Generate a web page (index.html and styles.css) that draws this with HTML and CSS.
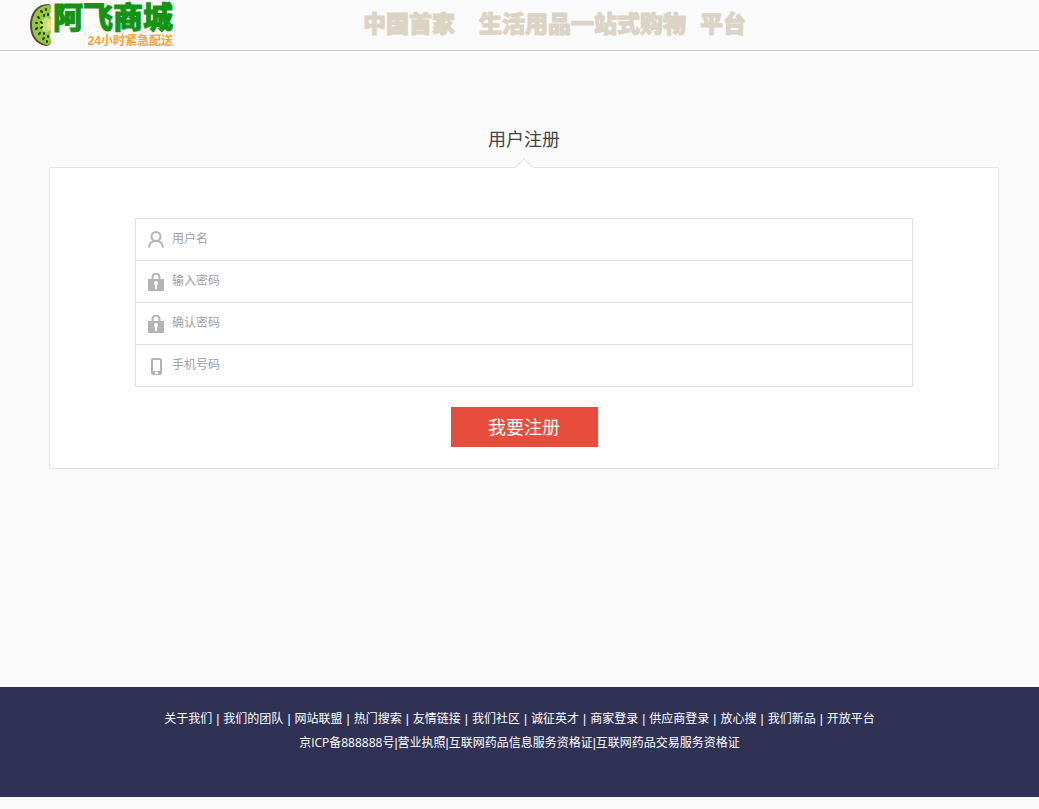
FILE: index.html
```html
<!DOCTYPE html>
<html lang="zh-CN">
<head>
    <meta charset="UTF-8">
    <meta name="viewport" content="width=device-width, initial-scale=1.0">
    <title>用户注册</title>
    <link rel="stylesheet" href="styles.css">
</head>
<body>
    <header class="header">
        <a class="logo" href="#">
            <svg class="logo-kiwi" width="24" height="44" viewBox="0 0 24 44">
                <path d="M19 1C8 1 1 10 1 22s7 20 16 21c3 0 5-2 5-4L8 22 22 5c0-3-1-4-3-4z" fill="#5a4a30"/>
                <path d="M19 2C9 3 3 11 3 22s6 18 15 20c3 0 4-2 4-4l-1-6 1-4V16l-1-4 1-6c0-3-1-4-3-4z" fill="#93c83e"/>
                <path d="M17 14l-5 4-1 4 2 5 5 3 3-3V16z" fill="#c5df7c"/>
                <path d="M22 16l-3 2-2 4 2 4 3 2z" fill="#f3dc7c"/>
                <path d="M12 8l1 1M17 6v1M15 12v1M19 11v1M9 14l1 1M7 20h1M12 19l1 1M7 26l1-1M12 25l1-1M10 31l1-1M15 30v1M14 36l1-1M19 33v1M18 38v1" stroke="#24350f" stroke-width="2" stroke-linecap="round"/>
            </svg>
            <span class="logo-text">
                <strong class="logo-name">阿飞商城</strong>
                <span class="logo-sub">24小时紧急配送</span>
            </span>
        </a>
        <p class="slogan"><span>中国首家</span><span>生活用品一站式购物</span><span>平台</span></p>
    </header>

    <main class="register">
        <h1 class="register-title">用户注册</h1>
        <form class="panel">
            <div class="fields">
                <div class="field">
                    <label for="username" aria-label="用户名">
                        <svg width="18" height="18" viewBox="0 0 18 18" fill="none" stroke="#b4b4b4" stroke-width="2">
                            <circle cx="9" cy="5.500" r="4.500"/>
                            <path d="M2 16.500c0-4 3-6.500 7-6.500s7 2.500 7 6.500"/>
                        </svg>
                    </label>
                    <input type="text" id="username" placeholder="用户名">
                </div>
                <div class="field">
                    <label for="password" aria-label="输入密码">
                        <svg width="18" height="18" viewBox="0 0 18 18">
                            <path d="M5.500 8V4a3.500 3.500 0 0 1 7 0V8" fill="none" stroke="#b4b4b4" stroke-width="2"/>
                            <path d="M1 6h16v12H1z" fill="#b4b4b4"/>
                            <path d="M9 8a2 2 0 0 1 2 2c0 1-1 2-1 3v3H8v-3c0-1-1-2-1-3a2 2 0 0 1 2-2z" fill="#fff"/>
                        </svg>
                    </label>
                    <input type="password" id="password" placeholder="输入密码">
                </div>
                <div class="field">
                    <label for="confirm" aria-label="确认密码">
                        <svg width="18" height="18" viewBox="0 0 18 18">
                            <path d="M5.500 8V4a3.500 3.500 0 0 1 7 0V8" fill="none" stroke="#b4b4b4" stroke-width="2"/>
                            <path d="M1 6h16v12H1z" fill="#b4b4b4"/>
                            <path d="M9 8a2 2 0 0 1 2 2c0 1-1 2-1 3v3H8v-3c0-1-1-2-1-3a2 2 0 0 1 2-2z" fill="#fff"/>
                        </svg>
                    </label>
                    <input type="password" id="confirm" placeholder="确认密码">
                </div>
                <div class="field">
                    <label for="phone" aria-label="手机号码">
                        <svg width="18" height="18" viewBox="0 0 18 18">
                            <rect x="4" y="1" width="11" height="17" rx="2" fill="#b4b4b4"/>
                            <path d="M6 3h7v11H6zM8 15h3v2H8z" fill="#fff"/>
                        </svg>
                    </label>
                    <input type="tel" id="phone" placeholder="手机号码">
                </div>
            </div>
            <button type="submit" class="submit">我要注册</button>
        </form>
    </main>

    <footer class="footer">
        <nav class="footer-links">
            <a href="#">关于我们</a><i>|</i>
            <a href="#">我们的团队</a><i>|</i>
            <a href="#">网站联盟</a><i>|</i>
            <a href="#">热门搜索</a><i>|</i>
            <a href="#">友情链接</a><i>|</i>
            <a href="#">我们社区</a><i>|</i>
            <a href="#">诚征英才</a><i>|</i>
            <a href="#">商家登录</a><i>|</i>
            <a href="#">供应商登录</a><i>|</i>
            <a href="#">放心搜</a><i>|</i>
            <a href="#">我们新品</a><i>|</i>
            <a href="#">开放平台</a>
        </nav>
        <p class="footer-info">京ICP备888888号<i>|</i>营业执照<i>|</i>互联网药品信息服务资格证<i>|</i>互联网药品交易服务资格证</p>
    </footer>
</body>
</html>
```

FILE: styles.css
```css
* {
    box-sizing: border-box;
}
body {
    margin: 0;
    background: #fafafa;
    font-family: "Open Sans", "Noto Sans CJK SC", sans-serif;
    font-size: 12px;
    color: #333;
}
a {
    color: inherit;
    text-decoration: none;
}

/* header */
.header {
    display: flex;
    height: 51px;
    padding-left: 29px;
    border-bottom: 1px solid #ccc;
}
.logo {
    display: flex;
    padding-top: 3px;
    font-family: "Liberation Sans", "Noto Sans CJK SC", sans-serif;
}
.logo-text {
    display: flex;
    flex-direction: column;
    align-items: flex-end;
}
.logo-name {
    font-size: 30px;
    line-height: 30px;
    font-weight: 900;
    color: #149414;
    -webkit-text-stroke: 1px #149414;
}
.logo-sub {
    font-size: 12px;
    line-height: 16px;
    font-weight: 700;
    color: #f9a13a;
}
.slogan {
    display: flex;
    margin: 0 0 0 190px;
    font-family: "Noto Sans CJK SC", sans-serif;
    font-size: 23px;
    line-height: 44px;
    font-weight: 900;
    color: #dbd3c3;
    -webkit-text-stroke: 1px #dbd3c3;
}
.slogan span + span {
    margin-left: 24px;
}
.slogan span:last-child {
    margin-left: 14px;
}

/* register form */
.register {
    padding: 76px 40px 0 49px;
}
.register-title {
    margin: 0;
    font-size: 18px;
    line-height: 24px;
    font-weight: 400;
    color: #444;
    text-align: center;
}
.panel {
    position: relative;
    margin-top: 16px;
    padding: 50px 85px 21px;
    border: 1px solid #e4e4e4;
    background: #fff;
    text-align: center;
}
.panel::before {
    content: "";
    position: absolute;
    top: -7px;
    left: 50%;
    width: 13px;
    height: 13px;
    margin-left: -7px;
    border: solid #e4e4e4;
    border-width: 1px 0 0 1px;
    background: #fff;
    transform: rotate(45deg);
}
.fields {
    border: 1px solid #dfdfdf;
}
.field {
    display: flex;
    align-items: center;
    height: 42px;
    padding-left: 11px;
}
.field + .field {
    border-top: 1px solid #dfdfdf;
}
.field:first-child {
    height: 41px;
}
.field label {
    height: 18px;
}
.field svg {
    display: block;
}
.field input {
    flex: 1;
    height: 40px;
    padding: 0 7px 2px;
    border: 0;
    outline: 0;
    background: none;
    font: inherit;
}
.field input::placeholder {
    color: #a0a0a0;
}
.submit {
    width: 147px;
    height: 40px;
    margin-top: 20px;
    padding: 0 0 2px;
    border: 0;
    background: #e84c3d;
    font-family: inherit;
    font-size: 18px;
    color: #fff;
    vertical-align: top;
    cursor: pointer;
}

/* footer */
.footer {
    height: 110px;
    margin: 218px 0 12px;
    padding-top: 20px;
    background: #2f3255;
    line-height: 24px;
    color: #fff;
    text-align: center;
}
.footer-links {
    display: flex;
    flex-wrap: wrap;
    justify-content: center;
    column-gap: 4px;
}
.footer i {
    font-family: "Liberation Sans", sans-serif;
    font-style: normal;
}
.footer-info {
    margin: 0;
}
```
